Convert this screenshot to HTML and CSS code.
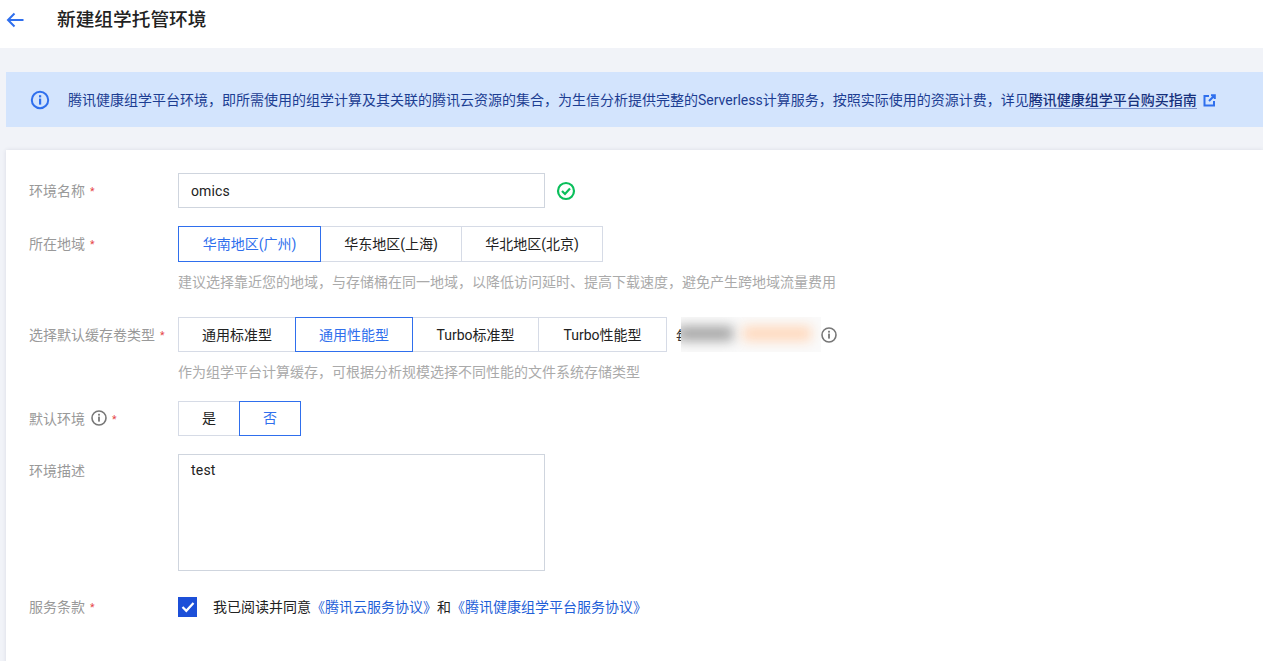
FILE: index.html
```html
<!DOCTYPE html>
<html lang="zh-CN">
<head>
<meta charset="utf-8">
<title>新建组学托管环境</title>
<link rel="stylesheet" href="styles.css">
</head>
<body>
<header class="topbar">
  <svg class="back" width="18" height="16" viewBox="0 0 18 16" fill="none" stroke="#2f6fed" stroke-width="2"><path d="M17.5 8H2M8.5 1.5L2 8l6.5 6.5"/></svg>
  <h1 class="title">新建组学托管环境</h1>
</header>
<main class="content">
  <section class="notice">
    <svg class="notice-icon" width="20" height="20" viewBox="0 0 20 20" fill="none"><circle cx="10" cy="10" r="8.2" stroke="#2f6fed" stroke-width="2"/><rect x="9" y="8.6" width="2.2" height="6" fill="#2f6fed"/><rect x="9" y="5.2" width="2.2" height="2.2" fill="#2f6fed"/></svg>
    <p class="notice-text">腾讯健康组学平台环境，即所需使用的组学计算及其关联的腾讯云资源的集合，为生信分析提供完整的Serverless计算服务，按照实际使用的资源计费，详见<a class="notice-link">腾讯健康组学平台购买指南</a></p>
    <svg class="ext-icon" width="13" height="13" viewBox="0 0 13 13" fill="none" stroke="#2f6fed" stroke-width="2"><path d="M6 2H1.5v9.5H11V7M6 7l5.5-5.5M8 1.2h3.8V5"/></svg>
  </section>
  <section class="card">
    <div class="row row-name">
      <div class="label">环境名称<span class="req">*</span></div>
      <div class="input">omics</div>
      <svg class="ok" width="20" height="20" viewBox="0 0 20 20" fill="none" stroke="#0abf5b" stroke-width="2.2"><circle cx="10" cy="10" r="8"/><path d="M6 10l3 3 5-5.4"/></svg>
    </div>
    <div class="row row-region">
      <div class="label">所在地域<span class="req">*</span></div>
      <div class="field">
        <div class="seg">
          <span class="opt opt-w143 on">华南地区(广州)</span><span class="opt opt-w141">华东地区(上海)</span><span class="opt opt-w141">华北地区(北京)</span>
        </div>
        <p class="hint">建议选择靠近您的地域，与存储桶在同一地域，以降低访问延时、提高下载速度，避免产生跨地域流量费用</p>
      </div>
    </div>
    <div class="row row-cache">
      <div class="label">选择默认缓存卷类型<span class="req">*</span></div>
      <div class="field">
        <div class="seg-line">
          <div class="seg">
            <span class="opt opt-w118">通用标准型</span><span class="opt opt-w118 on">通用性能型</span><span class="opt opt-w126">Turbo标准型</span><span class="opt opt-w129">Turbo性能型</span>
          </div>
          <span class="price-char">每</span>
          <div class="blur-box"><span class="blur-grey"></span><span class="blur-orange"></span></div>
          <svg class="info" width="16" height="16" viewBox="0 0 16 16" fill="none"><circle cx="8" cy="8" r="7" stroke="#777" stroke-width="1.6"/><rect x="7.1" y="6.6" width="1.8" height="5" fill="#777"/><rect x="7.1" y="3.8" width="1.8" height="1.8" fill="#777"/></svg>
        </div>
        <p class="hint">作为组学平台计算缓存，可根据分析规模选择不同性能的文件系统存储类型</p>
      </div>
    </div>
    <div class="row row-default">
      <div class="label">默认环境<svg class="info info-label" width="16" height="16" viewBox="0 0 16 16" fill="none"><circle cx="8" cy="8" r="7" stroke="#777" stroke-width="1.6"/><rect x="7.1" y="6.6" width="1.8" height="5" fill="#777"/><rect x="7.1" y="3.8" width="1.8" height="1.8" fill="#777"/></svg><span class="req">*</span></div>
      <div class="seg">
        <span class="opt opt-w62">是</span><span class="opt opt-w62 on">否</span>
      </div>
    </div>
    <div class="row row-desc">
      <div class="label label-desc">环境描述</div>
      <div class="textarea">test</div>
    </div>
    <div class="row row-terms">
      <div class="label">服务条款<span class="req">*</span></div>
      <span class="check"><svg width="14" height="12" viewBox="0 0 14 12" fill="none" stroke="#fff" stroke-width="2.2"><path d="M1.5 6l3.8 3.8L12.5 2"/></svg></span>
      <p class="terms">我已阅读并同意<a class="link">《腾讯云服务协议》</a>和<a class="link">《腾讯健康组学平台服务协议》</a></p>
    </div>
  </section>
</main>
</body>
</html>
```

FILE: styles.css
```css
* { box-sizing: border-box; }
html, body { margin: 0; height: 100%; overflow: hidden; }
body {
  background: #f1f3f8;
  color: #222;
  font-family: Roboto, "Noto Sans CJK SC", "Liberation Sans", sans-serif;
  font-size: 14px;
}
p { margin: 0; }
.topbar {
  height: 48px;
  background: #fff;
  display: flex;
  align-items: center;
  padding: 0 0 9px 6px;
}
.back { flex: none; }
.title {
  margin: 0 0 0 33px;
  font-size: 18.7px;
  font-weight: 500;
  line-height: 24px;
  color: #222;
}
.content { padding: 24px 0 0 6px; }
.notice {
  height: 55px;
  background: #d3e4fd;
  display: flex;
  align-items: center;
  padding-left: 24px;
  color: #1c3d92;
  white-space: nowrap;
}
.notice-icon { flex: none; }
.notice-text { margin: 0 0 2px 18px; }
.notice-link {
  font-weight: 500;
  color: #16307c;
  border-bottom: 1px solid #7d95cf;
}
.ext-icon { flex: none; margin: 1px 0 0 6px; }
.card {
  margin-top: 23px;
  height: 520px;
  background: #fff;
  padding: 23px 0 0 23px;
  box-shadow: 0 0 4px rgba(50, 60, 90, .12);
}
.row { display: flex; align-items: flex-start; }
.label {
  flex: none;
  width: 149px;
  height: 35px;
  padding-bottom: 2px;
  display: flex;
  align-items: center;
  color: #999;
  white-space: nowrap;
}
.req { color: #e54545; margin: 4px 0 0 5px; font-size: 10.5px; line-height: 12px; }
.field { display: flex; flex-direction: column; }
.input {
  width: 367px;
  height: 35px;
  border: 1px solid #cfd5de;
  padding: 0 12px;
  line-height: 34px;
  color: #222;
  letter-spacing: .1px;
}
.ok { margin: 8px 0 0 11px; }
.row-region { margin-top: 18px; }
.row-cache { margin-top: 25px; }
.row-default { margin-top: 19px; }
.row-desc { margin-top: 18px; }
.row-terms { margin-top: 26px; align-items: center; height: 20px; }
.seg { display: flex; flex: none; }
.seg-line { display: flex; align-items: center; height: 35px; }
.opt {
  height: 36px;
  line-height: 34px;
  border: 1px solid #d6dbe6;
  margin-left: -1px;
  text-align: center;
  color: #222;
  white-space: nowrap;
  position: relative;
}
.opt:first-child { margin-left: 0; }
.row-cache .opt { height: 35px; line-height: 34px; }
.row-default .opt { height: 35px; line-height: 33px; }
.opt.on { border-color: #2f6fed; color: #2f6fed; z-index: 1; }
.opt-w143 { width: 143px; }
.opt-w141 { width: 142px; }
.opt-w118 { width: 118px; }
.opt-w126 { width: 127px; }
.opt-w129 { width: 129px; }
.opt-w62 { width: 62px; }
.hint { color: #aaa; margin-top: 10px; line-height: 20px; white-space: nowrap; }
.price-char { width: 14px; margin: 0 -9px 0 9px; color: #333; flex: none; }
.blur-box {
  width: 140px;
  height: 35px;
  position: relative;
  overflow: hidden;
  background: #fafafa;
}
.blur-grey, .blur-orange {
  position: absolute;
  top: 9px;
  height: 15px;
  filter: blur(6px);
}
.blur-grey { left: -4px; width: 56px; background: #a6a6a6; }
.blur-orange { left: 62px; width: 68px; background: #ffd9bd; }
.info { flex: none; }
.info-label { margin-left: 6px; }
.textarea {
  width: 367px;
  height: 117px;
  border: 1px solid #cfd5de;
  padding: 6px 12px;
  line-height: 18px;
  letter-spacing: .2px;
}
.label-desc { height: 33px; }
.row-terms .label { height: 20px; }
.check {
  width: 19px;
  height: 20px;
  background: #1c4fd8;
  display: flex;
  align-items: center;
  justify-content: center;
  flex: none;
}
.terms { margin: 0 0 2px 16px; color: #222; white-space: nowrap; }
.link { color: #1f5fd8; }
```
